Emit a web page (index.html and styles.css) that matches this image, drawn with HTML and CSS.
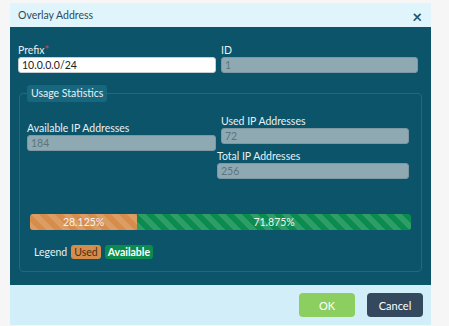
FILE: index.html
```html
<!DOCTYPE html>
<html lang="en">

<head>
  <meta charset="UTF-8" />
  <meta name="viewport" content="width=device-width, initial-scale=1.0" />
  <title>Overlay Address</title>

  <link rel="stylesheet" href="styles.css">
</head>

<body>
  <div class="modal">
    <div class="modal-header">
      <span class="modal-title">Overlay Address</span>
      <span class="close">&times;</span>
    </div>

    <div class="modal-body">
      <div class="row">
        <div class="field">
          <label>Prefix<span class="req">*</span></label>
          <input class="input" type="text" value="10.0.0.0/24">
        </div>
        <div class="field">
          <label>ID</label>
          <input class="input readonly" type="text" value="1" readonly>
        </div>
      </div>

      <fieldset class="stats">
        <legend>Usage Statistics</legend>

        <div class="stats-grid">
          <div class="field available">
            <label>Available IP Addresses</label>
            <input class="input readonly" type="text" value="184" readonly>
          </div>
          <div class="right-col">
            <div class="field used">
              <label>Used IP Addresses</label>
              <input class="input readonly" type="text" value="72" readonly>
            </div>
            <div class="field total">
              <label>Total IP Addresses</label>
              <input class="input readonly" type="text" value="256" readonly>
            </div>
          </div>
        </div>

        <div class="progress">
          <div class="bar bar-used" style="width: 28.125%">28.125%</div>
          <div class="bar bar-free" style="width: 71.875%">71.875%</div>
        </div>

        <div class="legend">
          Legend
          <span class="badge badge-used">Used</span>
          <span class="badge badge-free">Available</span>
        </div>
      </fieldset>
    </div>

    <div class="modal-footer">
      <button class="btn btn-ok">OK</button>
      <button class="btn btn-cancel">Cancel</button>
    </div>
  </div>
</body>

</html>
```

FILE: styles.css
```css
body {
  margin: 0;
  background-color: #f6f6f6;
  font-family: Lato, "Open Sans", sans-serif;
  font-size: 10.5px;
}

.modal {
  width: 421px;
  margin: 3px 0 0 10px;
}

.modal-header {
  height: 24px;
  background-color: #e0f4fb;
  display: flex;
  align-items: center;
  justify-content: space-between;
  padding: 0 8px;
  color: #2b4b5e;
}

.close {
  font-size: 17px;
  font-weight: 700;
  color: #1f5570;
  margin-top: 3px;
  margin-right: 1px;
}

.modal-body {
  background-color: #0b5469;
  padding: 17px 13px 13px 8px;
  color: #e8f1f4;
}

.row {
  display: grid;
  grid-template-columns: 198px 197px;
  column-gap: 5px;
}

.field label {
  display: block;
  line-height: 13px;
}

.req {
  color: #e0434f;
}

.input {
  box-sizing: border-box;
  display: block;
  width: 100%;
  height: 16px;
  margin: 0;
  padding: 0 3px;
  border: 1px solid #c4ced3;
  border-radius: 3px;
  background: #fff;
  font-family: inherit;
  font-size: 10.5px;
  color: #222;
  outline: none;
}

.input.readonly {
  background: #8fa9b2;
  border-color: #7d98a2;
  color: #5c7580;
}

.stats {
  margin: 12px -4px 0 1px;
  padding: 0 10px 12px 7px;
  border: 1px solid #1b6b81;
  border-radius: 4px;
  min-width: 0;
}

.stats legend {
  margin-left: 0;
  padding: 2px 4px;
  background-color: #17687f;
  border-radius: 3px;
  color: #e8f1f4;
  line-height: 13px;
}

.stats-grid {
  display: grid;
  grid-template-columns: 189px 188px;
  column-gap: 5px;
}

.available {
  margin-top: 20px;
}

.used {
  margin-top: 13px;
}

.total {
  margin-top: 6px;
  margin-left: -4px;
}

.progress {
  display: flex;
  height: 16px;
  margin: 35px 0 0 3px;
  width: 381px;
  border-radius: 3px;
  overflow: hidden;
}

.bar {
  text-align: center;
  line-height: 16px;
  color: #f3f3f3;
  background-size: 16px 16px;
  background-image: linear-gradient(45deg, rgba(255, 255, 255, .15) 25%, transparent 25%, transparent 50%, rgba(255, 255, 255, .15) 50%, rgba(255, 255, 255, .15) 75%, transparent 75%, transparent);
}

.bar-used {
  background-color: #d68c4a;
}

.bar-free {
  background-color: #0a8c4e;
}

.legend {
  margin: 15px 0 0 7px;
  display: flex;
  align-items: center;
  gap: 4px;
}

.badge {
  padding: 1px 3px;
  border-radius: 3px;
  line-height: 12px;
}

.badge-used {
  background-color: #d68c4a;
  color: #4a2f17;
}

.badge-free {
  background-color: #0a8c4e;
  color: #fff;
  font-weight: 700;
}

.modal-footer {
  height: 40px;
  background-color: #d2eff9;
  display: flex;
  align-items: center;
  justify-content: flex-end;
  gap: 12px;
  padding: 0 8px;
}

.btn {
  width: 56px;
  height: 24px;
  border: 0;
  border-radius: 4px;
  font-family: inherit;
  font-size: 11px;
  color: #fff;
}

.btn-ok {
  background-color: #8ccf60;
}

.btn-cancel {
  background-color: #34495e;
}
```
